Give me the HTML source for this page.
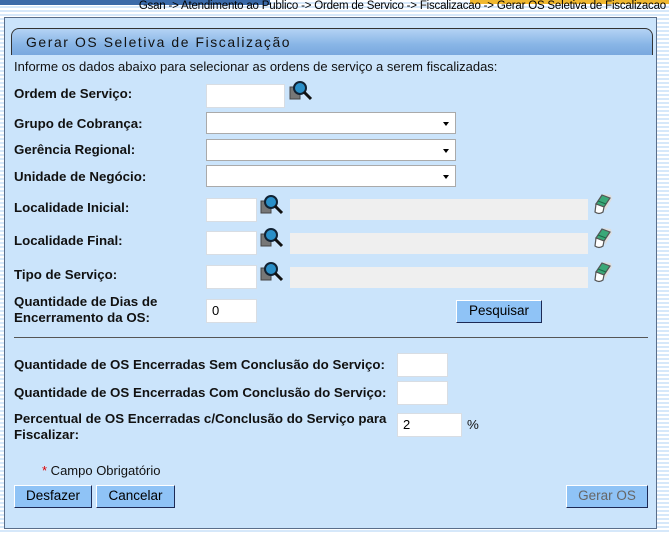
<!DOCTYPE html>
<html><head><meta charset="utf-8"><style>
*{margin:0;padding:0;box-sizing:border-box}
body{width:669px;height:534px;overflow:hidden;position:relative;font-family:"Liberation Sans",Arial,sans-serif;
background:repeating-linear-gradient(#fff 0,#fff 2px,#d6e8fa 2px,#d6e8fa 4px);}
.a{position:absolute}
.crumb{right:3px;top:0;font-size:11.5px;color:#000;white-space:nowrap;line-height:12px;letter-spacing:-0.2px}
.panel{left:4px;top:17px;width:653px;height:512px;background:#cbe4fb;border:1px solid #5a6e8a}
.title{left:11px;top:28px;width:642px;height:27px;border:1px solid #333;border-bottom:none;border-radius:8px 8px 0 0;
background:linear-gradient(#b4d3f4,#88b5e6 60%,#7aa8de);font-size:13.9px;letter-spacing:1.6px;padding:5px 0 0 14px;color:#111}
.l{font-size:13.3px;font-weight:bold;color:#111;line-height:16px;white-space:nowrap}
.t{font-size:13px;color:#111;white-space:nowrap}
.in{background:#fff;border:1px solid #d8dde3;height:24px;font-size:13px;padding:3px 0 0 5px}
.sel{background:#fff;border:1px solid #aaa;height:22px}
.sel:after{content:"";position:absolute;right:6px;top:9px;border:3px solid transparent;border-top:4px solid #000}
.gray{background:#efefef;height:21px}
.btn{background:#8fc3f6;border:1px solid #333;border-color:#fff #1d2a55 #1d2a55 #fff;font-size:13.5px;text-align:center;line-height:20px;height:23px;color:#000}
</style></head><body>
<div class="a" style="left:0;top:0;width:270px;height:5px;background:#3b6aa8"></div>
<div class="a" style="left:470px;top:0;width:199px;height:4px;background:#f0b830"></div>
<div class="a crumb">Gsan -&gt; Atendimento ao Publico -&gt; Ordem de Servico -&gt; Fiscalizacao -&gt; Gerar OS Seletiva de Fiscalizacao</div>
<div class="a panel"></div>
<div class="a title">Gerar OS Seletiva de Fiscalização</div>
<div class="a t" style="left:14px;top:59px">Informe os dados abaixo para selecionar as ordens de serviço a serem fiscalizadas:</div>

<div class="a l" style="left:14px;top:86px">Ordem de Serviço:</div>
<div class="a in" style="left:206px;top:84px;width:79px"></div>

<div class="a l" style="left:14px;top:116px">Grupo de Cobrança:</div>
<div class="a sel" style="left:206px;top:112px;width:250px"></div>
<div class="a l" style="left:14px;top:142px">Gerência Regional:</div>
<div class="a sel" style="left:206px;top:139px;width:250px"></div>
<div class="a l" style="left:14px;top:169px">Unidade de Negócio:</div>
<div class="a sel" style="left:206px;top:165px;width:250px"></div>

<div class="a l" style="left:14px;top:200px">Localidade Inicial:</div>
<div class="a in" style="left:206px;top:198px;width:51px"></div>
<div class="a gray" style="left:290px;top:199px;width:298px"></div>
<div class="a l" style="left:14px;top:233px">Localidade Final:</div>
<div class="a in" style="left:206px;top:231px;width:51px"></div>
<div class="a gray" style="left:290px;top:233px;width:298px"></div>
<div class="a l" style="left:14px;top:267px">Tipo de Serviço:</div>
<div class="a in" style="left:206px;top:265px;width:51px"></div>
<div class="a gray" style="left:290px;top:267px;width:298px"></div>

<div class="a l" style="left:14px;top:294px">Quantidade de Dias de<br>Encerramento da OS:</div>
<div class="a in" style="left:206px;top:299px;width:51px">0</div>
<div class="a btn" style="left:456px;top:300px;width:86px">Pesquisar</div>
<div class="a" style="left:14px;top:337px;width:634px;height:1px;background:#555"></div>

<div class="a l" style="left:14px;top:357px">Quantidade de OS Encerradas Sem Conclusão do Serviço:</div>
<div class="a in" style="left:397px;top:353px;width:51px"></div>
<div class="a l" style="left:14px;top:385px">Quantidade de OS Encerradas Com Conclusão do Serviço:</div>
<div class="a in" style="left:397px;top:381px;width:51px"></div>
<div class="a l" style="left:14px;top:411px">Percentual de OS Encerradas c/Conclusão do Serviço para<br>Fiscalizar:</div>
<div class="a in" style="left:397px;top:413px;width:65px">2</div>
<div class="a l" style="left:467px;top:417px;font-weight:normal">%</div>

<div class="a t" style="left:42px;top:463px"><span style="color:#d00">*</span> Campo Obrigatório</div>
<div class="a btn" style="left:14px;top:485px;width:78px">Desfazer</div>
<div class="a btn" style="left:96px;top:485px;width:79px">Cancelar</div>
<div class="a btn" style="left:566px;top:485px;width:82px;color:#666">Gerar OS</div>

<svg width="0" height="0" style="position:absolute"><defs>
<g id="mg"><rect x="1" y="7" width="10" height="12" fill="#777" stroke="#444"/><circle cx="11" cy="8" r="6" fill="#2a8fc8" stroke="#123" stroke-width="2"/><line x1="15" y1="12" x2="22" y2="19" stroke="#111" stroke-width="3"/></g>
<g id="er"><path d="M11 1 L19 2 L20 6 L13 18 Z" fill="#ddd"/><path d="M10 2 L18 5 L12 14 L4 11 Z" fill="#3aa878" stroke="#555" stroke-width="1.2"/><line x1="6" y1="8" x2="14" y2="11" stroke="#1d6a48"/><path d="M4 11 L12 14 L11 19 Q7 22 3 19 Z" fill="#fff" stroke="#555" stroke-width="1.2"/></g>
</defs></svg>
<svg class="a" style="left:289px;top:80px" width="26" height="22"><use href="#mg"/></svg>
<svg class="a" style="left:260px;top:194px" width="26" height="22"><use href="#mg"/></svg>
<svg class="a" style="left:260px;top:227px" width="26" height="22"><use href="#mg"/></svg>
<svg class="a" style="left:260px;top:261px" width="26" height="22"><use href="#mg"/></svg>
<svg class="a" style="left:592px;top:193px" width="22" height="23"><use href="#er"/></svg>
<svg class="a" style="left:592px;top:227px" width="22" height="23"><use href="#er"/></svg>
<svg class="a" style="left:592px;top:261px" width="22" height="23"><use href="#er"/></svg>
</body></html>
